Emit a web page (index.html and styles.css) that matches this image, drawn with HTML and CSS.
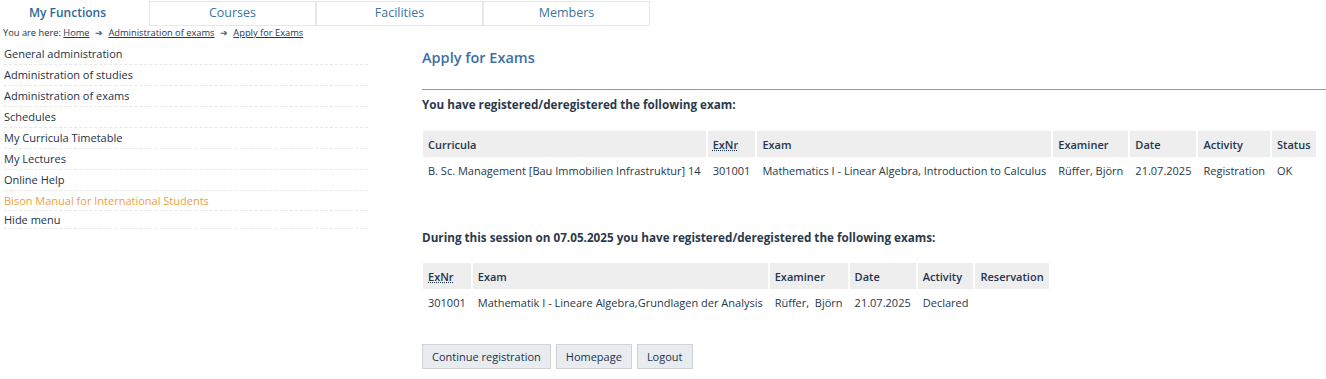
FILE: index.html
```html
<!DOCTYPE html>
<html>
<head>
<meta charset="utf-8">
<link rel="stylesheet" href="styles.css">
</head>
<body>
<div class="tabs">
  <div class="tab active">My Functions</div>
  <div class="tab">Courses</div>
  <div class="tab">Facilities</div>
  <div class="tab">Members</div>
</div>
<div class="crumbs">You are here: <a href="#">Home</a> <span class="arr">➔</span> <a href="#">Administration of exams</a> <span class="arr">➔</span> <a href="#">Apply for Exams</a></div>
<div class="layout">
  <ul class="menu">
    <li>General administration</li>
    <li>Administration of studies</li>
    <li>Administration of exams</li>
    <li>Schedules</li>
    <li>My Curricula Timetable</li>
    <li>My Lectures</li>
    <li>Online Help</li>
    <li class="orange">Bison Manual for International Students</li>
    <li class="last">Hide menu</li>
  </ul>
  <main class="main">
    <h1 class="title">Apply for Exams</h1>
    <hr class="rule">
    <p class="lead">You have registered/deregistered the following exam:</p>
    <table class="grid t1">
      <tr><th>Curricula</th><th><abbr>ExNr</abbr></th><th>Exam</th><th>Examiner</th><th>Date</th><th>Activity</th><th>Status</th></tr>
      <tr><td>B. Sc. Management [Bau Immobilien Infrastruktur] 14</td><td>301001</td><td>Mathematics I - Linear Algebra, Introduction to Calculus</td><td>Rüffer, Björn</td><td>21.07.2025</td><td>Registration</td><td>OK</td></tr>
    </table>
    <p class="lead second">During this session on 07.05.2025 you have registered/deregistered the following exams:</p>
    <table class="grid t2">
      <tr><th><abbr>ExNr</abbr></th><th>Exam</th><th>Examiner</th><th>Date</th><th>Activity</th><th>Reservation</th></tr>
      <tr><td>301001</td><td>Mathematik I - Lineare Algebra,Grundlagen der Analysis</td><td>Rüffer,&nbsp; Björn</td><td>21.07.2025</td><td>Declared</td><td></td></tr>
    </table>
    <div class="buttons">
      <button class="btn">Continue registration</button>
      <button class="btn">Homepage</button>
      <button class="btn">Logout</button>
    </div>
  </main>
</div>
</body>
</html>
```

FILE: styles.css
```css
* { box-sizing: border-box; }
body {
  margin: 0;
  font-family: "Open Sans", "Liberation Sans", sans-serif;
  color: #1d3247;
  background: #fff;
}
.tabs {
  display: flex;
  padding-top: 1px;
  height: 26px;
}
.tab {
  width: 167px;
  height: 25px;
  border: 1px solid #e3e8ec;
  text-align: center;
  font-size: 12.5px;
  line-height: 21px;
  color: #3b74a3;
}
.tab.active {
  width: 149px;
  border-color: transparent;
  font-weight: 600;
  font-size: 12px;
  color: #2f6795;
  padding-right: 14px;
}
.crumbs {
  font-size: 9.3px;
  line-height: 14px;
  padding-left: 3px;
  color: #1d3247;
}
.crumbs a { color: #1d3a5c; }
.crumbs .arr { font-size: 9px; color: #3b5a7a; padding: 0 3px; }
.layout {
  display: flex;
  align-items: flex-start;
}
.menu {
  list-style: none;
  margin: 4px 0 0 4px;
  padding: 0;
  width: 364px;
  flex: none;
}
.menu li {
  font-size: 11px;
  line-height: 20px;
  border-bottom: 1px dashed #e8e8e8;
  color: #1d3247;
}
.menu li.orange { color: #f0a040; line-height: 19px; }
.menu li.last { line-height: 17px; }
.main {
  flex: 1;
  margin-left: 54px;
}
.title {
  margin: 8px 0 0;
  font-size: 14.5px;
  font-weight: 600;
  color: #3c6fa6;
  line-height: 20px;
}
.rule {
  margin: 21px 0 0;
  border: 0;
  border-top: 1px solid #999;
  height: 0;
}
.lead {
  font-size: 11.7px;
  font-weight: 700;
  color: #2a3a4c;
  margin: 6px 0 0;
  line-height: 17px;
}
.lead.second { margin-top: 46px; }
.grid {
  border-spacing: 2px;
  margin-left: -1px;
  font-size: 11px;
  color: #26384a;
}
.t1 { margin-top: 16px; }
.t2 { margin-top: 15px; }
.grid th {
  background: #eeeeee;
  text-align: left;
  font-weight: 600;
  padding: 0 5px;
  height: 26px;
  color: #1f3550;
}
.grid td {
  padding: 3px 5px;
  height: 22px;
  white-space: nowrap;
}
abbr { text-decoration: underline dotted; }
.buttons {
  display: flex;
  gap: 5px;
  margin-top: 29px;
}
.btn {
  font-family: inherit;
  font-size: 11px;
  height: 25px;
  padding: 0 9px;
  background: #e8ecf0;
  border: 1px solid #cfd3d6;
  color: #1d3247;
}
```
